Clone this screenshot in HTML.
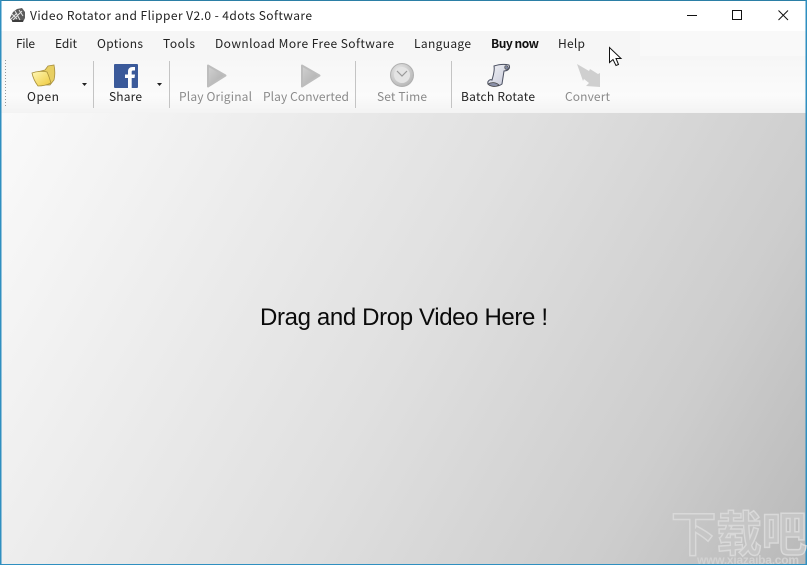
<!DOCTYPE html>
<html><head><meta charset="utf-8"><style>
html,body{margin:0;padding:0;width:807px;height:565px;overflow:hidden;background:#fff}
svg{display:block}
text{font-family:"Noto Sans CJK SC","Liberation Sans",sans-serif;font-size:12px;fill:#222}
.d{fill:#8a8a8a}
</style></head><body>
<svg width="807" height="565" viewBox="0 0 807 565" xmlns="http://www.w3.org/2000/svg">
<defs>
<linearGradient id="bg" gradientUnits="userSpaceOnUse" x1="0" y1="113" x2="807" y2="565">
<stop offset="0" stop-color="#fafafa"/><stop offset="0.5" stop-color="#e0e0e0"/><stop offset="0.8" stop-color="#cdcdcd"/><stop offset="1" stop-color="#b9b9b9"/></linearGradient>
<linearGradient id="tb" x1="0" y1="0" x2="0" y2="1"><stop offset="0" stop-color="#f6f6f6"/><stop offset="0.7" stop-color="#fbfbfb"/><stop offset="1" stop-color="#f3f3f3"/></linearGradient>
<linearGradient id="fo" x1="0" y1="0" x2="1" y2="1"><stop offset="0" stop-color="#fff8b8"/><stop offset="1" stop-color="#eec93a"/></linearGradient>
<linearGradient id="pl" x1="0" y1="0" x2="1" y2="1"><stop offset="0" stop-color="#d2d2d2"/><stop offset="1" stop-color="#a9a9a9"/></linearGradient>
<linearGradient id="sc" x1="0" y1="0" x2="1" y2="1"><stop offset="0" stop-color="#f2f2f6"/><stop offset="1" stop-color="#c4c8d8"/></linearGradient>
<radialGradient id="ck" cx=".4" cy=".35" r=".7"><stop offset="0" stop-color="#eee"/><stop offset="1" stop-color="#b4b4b4"/></radialGradient>
</defs>
<rect width="807" height="565" fill="#fff"/>
<rect x="0" y="113" width="807" height="452" fill="url(#bg)"/>
<rect x="1" y="31" width="805" height="25" fill="#f6f6f6"/>
<rect x="640" y="31" width="166" height="25" fill="#f9f9f9"/>
<rect x="1" y="56" width="805" height="57" fill="url(#tb)"/>
<rect x="0" y="0" width="807" height="1" fill="#2b7fa6"/>
<rect x="0" y="0" width="1.500" height="565" fill="#2f8fc0"/>
<rect x="805.500" y="0" width="1.500" height="565" fill="#2f8fc0"/>
<rect x="0" y="564" width="807" height="1" fill="#2f8fc0"/>

<!-- app icon -->
<g transform="translate(10,8)">
<path d="M0 10 L3 4 L7 1 L12 0 L15 4 L15 10 L13 14 L3 14Z" fill="#5c5c5c"/>
<path d="M2 6 L7 11 M5 3 L10 12 M9 2 L13 8 M12 3 L3 12 M1 11 L7 5" stroke="#e4e4e4" stroke-width="1" fill="none"/>
<path d="M2 13 L13 13" stroke="#333" stroke-width="1.500"/>
</g>
<text x="30" y="20" textLength="282" lengthAdjust="spacing">Video Rotator and Flipper V2.0 - 4dots Software</text>

<!-- window controls -->
<path d="M687 15.500H697" stroke="#111" stroke-width="1"/>
<rect x="732.500" y="10.500" width="9" height="9" fill="none" stroke="#111"/>
<path d="M778.500 10.500L788 20M788 10.500L778.500 20" stroke="#111" fill="none"/>

<!-- menu -->
<text x="16" y="48" textLength="19" lengthAdjust="spacing">File</text>
<text x="55" y="48" textLength="22" lengthAdjust="spacing">Edit</text>
<text x="97" y="48" textLength="46" lengthAdjust="spacing">Options</text>
<text x="163" y="48" textLength="32" lengthAdjust="spacing">Tools</text>
<text x="215" y="48" textLength="179" lengthAdjust="spacing">Download More Free Software</text>
<text x="414" y="48" textLength="57" lengthAdjust="spacing">Language</text>
<text x="491" y="48" textLength="48" lengthAdjust="spacing" style="font-weight:700;fill:#111">Buy now</text>
<text x="558" y="48" textLength="27" lengthAdjust="spacing">Help</text>

<!-- grip & separators -->
<path d="M5.500 60V106" stroke="#999" stroke-dasharray="1 2"/>
<path d="M93.500 61V108M169.500 61V108M355.500 61V108M451.500 61V108" stroke="#c4c4c4"/>

<!-- folder -->
<path d="M37 72 L45 70 L48 66 L54 65 C55 70 55 76 54 80 L50 85 L40 85Z" fill="#e8cf62" stroke="#a89040" stroke-width=".8"/>
<path d="M32 73 C37 71 44 71 47 72 C49 76 50 80 51 83 C47 85 42 86 38 86 C35 82 33 78 32 73Z" fill="url(#fo)" stroke="#a8903a" stroke-width=".8"/>
<text x="27" y="101" textLength="32" lengthAdjust="spacing">Open</text>
<path d="M82 83h5l-2.500 3z" fill="#222"/>

<!-- facebook -->
<rect x="114" y="64" width="24" height="24" rx="1" fill="#3b5a9a"/>
<path d="M128 88V78H125V74.500H128V71.500C128 68.500 130 67 132.500 67H135V70.500H133C132 70.500 131.700 71 131.700 72V74.500H135L134.500 78H131.700V88Z" fill="#fff"/>
<text x="109" y="101" textLength="33" lengthAdjust="spacing">Share</text>
<path d="M157 83h5l-2.500 3z" fill="#222"/>

<!-- play -->
<path d="M208 65.500 L225.500 75.500 L208 86.500Z" fill="url(#pl)" stroke="#bdbdbd" stroke-width="2" stroke-linejoin="round"/>
<text class="d" x="179" y="101" textLength="73" lengthAdjust="spacing">Play Original</text>
<path d="M302 65.500 L319.500 75.500 L302 86.500Z" fill="url(#pl)" stroke="#bdbdbd" stroke-width="2" stroke-linejoin="round"/>
<text class="d" x="263" y="101" textLength="86" lengthAdjust="spacing">Play Converted</text>

<!-- clock -->
<circle cx="402" cy="75" r="11.500" fill="url(#ck)" stroke="#b0b0b0"/>
<circle cx="402" cy="75" r="8" fill="#e4e4e4"/>
<path d="M397 71L402 76L407 71" stroke="#999" stroke-width="1.200" fill="none"/>
<text class="d" x="377" y="101" textLength="50" lengthAdjust="spacing">Set Time</text>

<!-- scroll -->
<path d="M494 66 C500 64 505 64 509 65 C511 69 507 71 504 71 L502 84 C498 87 491 87 488 84 C487 81 490 79 492 80 C493 76 495 71 494 66Z" fill="url(#sc)" stroke="#4a4f60" stroke-width="1"/>
<path d="M505 66 C507 65 509 67 508 69 C506 70 504 69 505 66Z" fill="#7e86a0" stroke="#444" stroke-width=".6"/>
<path d="M488 84 C491 82 496 82 499 85 C496 87 491 87 488 84Z" fill="#8a90a8" stroke="#444" stroke-width=".7"/>
<text x="461" y="101" textLength="74" lengthAdjust="spacing">Batch Rotate</text>

<!-- convert -->
<path d="M577 64 L589 71 L590 69 L598 74 L600 73 L600 87 L586 86 L589 83 L584 79 L583 81Z" fill="#cfcfcf"/>
<text class="d" x="565" y="101" textLength="45" lengthAdjust="spacing">Convert</text>

<!-- cursor -->
<path d="M609.500 47.500V62.500L613 59.500L616 65.500L618.500 64.500L616 58.500L621 58.500Z" fill="#fff" stroke="#111" stroke-width="1"/>

<!-- main -->
<text x="260" y="325" textLength="288" lengthAdjust="spacing" style="font-family:'Liberation Sans',sans-serif;font-size:24px;fill:#0a0a0a">Drag and Drop Video Here !</text>

<!-- watermark -->
<text x="671" y="551" textLength="136" lengthAdjust="spacingAndGlyphs" style="font-size:48px;font-weight:700;fill:#c6c6c6;stroke:#d9d9d9;stroke-width:1.500">下载吧</text>
<text x="697" y="564" textLength="102" lengthAdjust="spacing" style="font-family:'Liberation Sans',sans-serif;font-size:12px;font-weight:700;fill:#d2d2d2">www.xiazaiba.com</text>
</svg>
</body></html>
